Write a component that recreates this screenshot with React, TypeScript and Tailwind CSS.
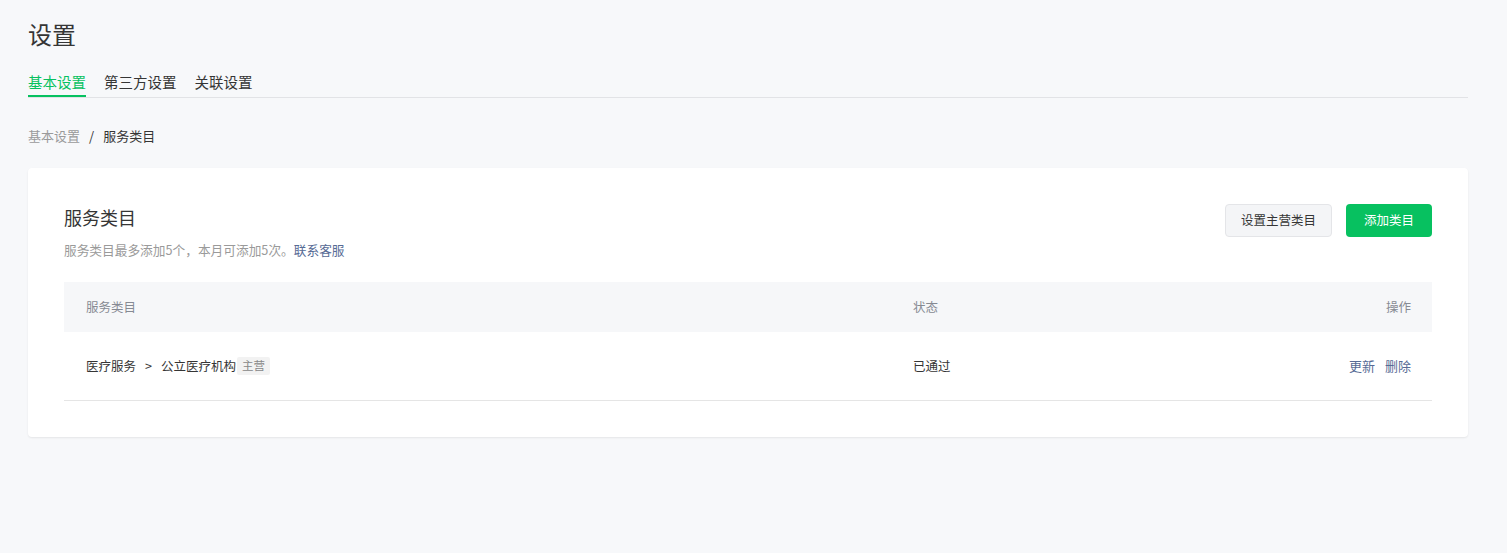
import React from "react";

const tabs = ["基本设置", "第三方设置", "关联设置"];

export default function App() {
  return (
    <div
      className="min-h-screen bg-[#f7f8fa] pl-[28px] pr-[39px] pt-[18px] text-[#353535]"
      style={{ fontFamily: '"Noto Sans CJK SC", "Noto Sans", sans-serif' }}
    >
      <h1 className="text-[24px] leading-[32px] font-normal">设置</h1>

      <div className="mt-[21px] flex gap-[18px] border-b border-[#e2e3e6]">
        {tabs.map((t, i) => (
          <div
            key={t}
            className={
              i === 0
                ? "text-[14.5px] leading-[22px] pb-[2px] border-b-2 border-[#07c160] text-[#07c160]"
                : "text-[14.5px] leading-[22px] pb-[2px] border-b-2 border-transparent"
            }
          >
            {t}
          </div>
        ))}
      </div>

      <div className="mt-[28px] flex items-center text-[13px] leading-[20px]">
        <span className="text-[#9a9a9a]">基本设置</span>
        <span className="mx-[9px] text-[#353535]">/</span>
        <span>服务类目</span>
      </div>

      <div className="mt-[22px] bg-white rounded-[4px] shadow-[0_1px_2px_rgba(0,0,0,0.08)] p-[36px]">
        <div className="flex items-start justify-between">
          <div>
            <h2 className="text-[18px] leading-[26px] font-normal">服务类目</h2>
            <p className="mt-[10px] text-[12.7px] leading-[20px] text-[#9a9a9a]">
              服务类目最多添加5个，本月可添加5次。
              <span className="text-[#576b95]">联系客服</span>
            </p>
          </div>
          <div className="flex gap-[14px]">
            <button className="h-[33px] w-[107px] rounded-[4px] border border-[#e4e5e8] bg-[#f4f5f7] text-[12.5px] text-[#353535]">
              设置主营类目
            </button>
            <button className="h-[33px] w-[86px] rounded-[4px] bg-[#07c160] text-[12.5px] text-white">
              添加类目
            </button>
          </div>
        </div>

        <div className="mt-[22px]">
          <div className="flex items-center h-[50px] bg-[#f6f7f9] pl-[22px] pr-[21px] text-[12.5px] text-[#868a93]">
            <div className="flex-1">服务类目</div>
            <div className="w-[338px]">状态</div>
            <div className="w-[160px] text-right">操作</div>
          </div>
          <div className="flex items-center h-[69px] border-b border-[#e5e5e5] pl-[22px] pr-[21px] text-[12.5px]">
            <div className="flex-1 flex items-center">
              <span>医疗服务</span>
              <span className="mx-[9px]">&gt;</span>
              <span>公立医疗机构</span>
              <span className="ml-[1px] h-[18px] px-[5px] flex items-center bg-[#f2f2f2] rounded-[2px] text-[11.5px] text-[#888]">
                主营
              </span>
            </div>
            <div className="w-[338px]">已通过</div>
            <div className="w-[160px] flex justify-end gap-[10px] text-[13px] text-[#576b95]">
              <span>更新</span>
              <span>删除</span>
            </div>
          </div>
        </div>
      </div>
    </div>
  );
}
